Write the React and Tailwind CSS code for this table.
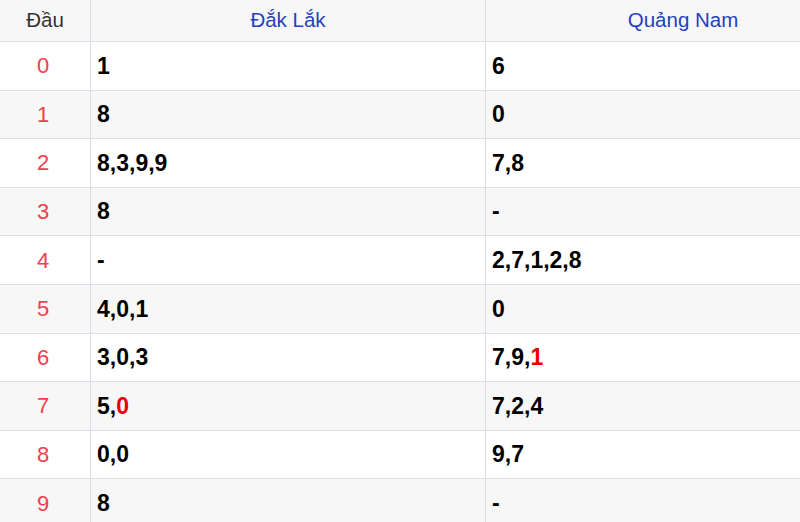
const rows = [
  { d: '0', a: ['1'], b: ['6'] },
  { d: '1', a: ['8'], b: ['0'] },
  { d: '2', a: ['8', '3', '9', '9'], b: ['7', '8'] },
  { d: '3', a: ['8'], b: ['-'] },
  { d: '4', a: ['-'], b: ['2', '7', '1', '2', '8'] },
  { d: '5', a: ['4', '0', '1'], b: ['0'] },
  { d: '6', a: ['3', '0', '3'], b: ['7', '9', '1*'] },
  { d: '7', a: ['5', '0*'], b: ['7', '2', '4'] },
  { d: '8', a: ['0', '0'], b: ['9', '7'] },
  { d: '9', a: ['8'], b: ['-'] },
];

// "*" marks a number shown in red
const Nums = ({ list }) => (
  <span>
    {list.map((n, i) => (
      <span key={i}>
        {i > 0 && ','}
        {n.endsWith('*') ? <span className="text-[#e80000]">{n.slice(0, -1)}</span> : n}
      </span>
    ))}
  </span>
);

export default function App() {
  return (
    <div className="w-[800px] h-[522px] overflow-hidden bg-white font-['Liberation_Sans',Arial,sans-serif]">
      <div className="w-[880px]">
        <div className="grid grid-cols-[91px_395px_394px] h-[42px] bg-[#f7f7f8] border-b border-[#dedee6] text-[20.5px]">
          <div className="flex items-center justify-center border-r border-[#dedee6] text-[#333]">Đầu</div>
          <div className="flex items-center justify-center border-r border-[#dedee6] text-[#2541bf]">Đắk Lắk</div>
          <div className="flex items-center justify-center text-[#2541bf]">Quảng Nam</div>
        </div>
        {rows.map((r, i) => (
          <div
            key={r.d}
            className={`grid grid-cols-[91px_395px_394px] h-[48.6px] border-b border-[#dedee6] text-[23px] ${i % 2 ? 'bg-[#f7f7f8]' : 'bg-white'}`}
          >
            <div className="flex items-center justify-center pr-[4px] border-r border-[#dedee6] text-[22px] text-[#f0404c]">{r.d}</div>
            <div className="flex items-center pl-[6px] border-r border-[#dedee6] font-bold text-black">
              <Nums list={r.a} />
            </div>
            <div className="flex items-center pl-[6px] font-bold text-black">
              <Nums list={r.b} />
            </div>
          </div>
        ))}
      </div>
    </div>
  );
}
